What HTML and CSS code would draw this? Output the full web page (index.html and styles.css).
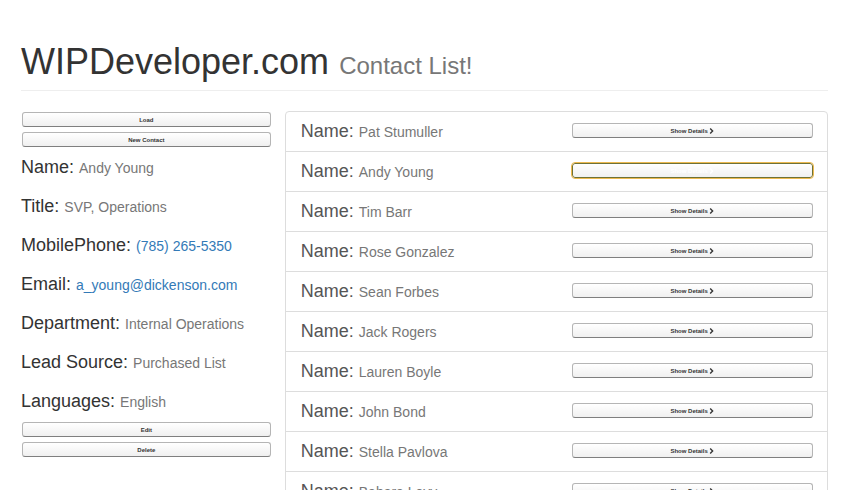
FILE: index.html
```
<!DOCTYPE html>
<html lang="en">
<head>
<meta charset="utf-8">
<title>WIPDeveloper.com Contact List</title>
<link rel="stylesheet" href="styles.css">
</head>
<body>
<header class="page-header">
  <h1>WIPDeveloper.com <small>Contact List!</small></h1>
</header>
<div class="layout">
  <section class="details">
    <button class="btn" type="button">Load</button>
    <button class="btn" type="button">New Contact</button>
    <div class="fields">
      <h4>Name: <small>Andy Young</small></h4>
      <h4>Title: <small>SVP, Operations</small></h4>
      <h4>MobilePhone: <small><a href="tel:7852655350">(785) 265-5350</a></small></h4>
      <h4>Email: <small><a href="mailto:a_young@dickenson.com">a_young@dickenson.com</a></small></h4>
      <h4>Department: <small>Internal Operations</small></h4>
      <h4>Lead Source: <small>Purchased List</small></h4>
      <h4>Languages: <small>English</small></h4>
    </div>
    <button class="btn" type="button">Edit</button>
    <button class="btn" type="button">Delete</button>
  </section>
  <main>
    <ul class="contacts">
      <li><h4>Name: <small>Pat Stumuller</small></h4><button class="btn" type="button">Show Details <svg class="chevron" viewBox="0 0 5 6" aria-hidden="true"><path d="M1.2.6 3.6 3 1.2 5.4"/></svg></button></li>
      <li><h4>Name: <small>Andy Young</small></h4><button class="btn selected" type="button">Show Details <svg class="chevron" viewBox="0 0 5 6" aria-hidden="true"><path d="M1.2.6 3.6 3 1.2 5.4"/></svg></button></li>
      <li><h4>Name: <small>Tim Barr</small></h4><button class="btn" type="button">Show Details <svg class="chevron" viewBox="0 0 5 6" aria-hidden="true"><path d="M1.2.6 3.6 3 1.2 5.4"/></svg></button></li>
      <li><h4>Name: <small>Rose Gonzalez</small></h4><button class="btn" type="button">Show Details <svg class="chevron" viewBox="0 0 5 6" aria-hidden="true"><path d="M1.2.6 3.6 3 1.2 5.4"/></svg></button></li>
      <li><h4>Name: <small>Sean Forbes</small></h4><button class="btn" type="button">Show Details <svg class="chevron" viewBox="0 0 5 6" aria-hidden="true"><path d="M1.2.6 3.6 3 1.2 5.4"/></svg></button></li>
      <li><h4>Name: <small>Jack Rogers</small></h4><button class="btn" type="button">Show Details <svg class="chevron" viewBox="0 0 5 6" aria-hidden="true"><path d="M1.2.6 3.6 3 1.2 5.4"/></svg></button></li>
      <li><h4>Name: <small>Lauren Boyle</small></h4><button class="btn" type="button">Show Details <svg class="chevron" viewBox="0 0 5 6" aria-hidden="true"><path d="M1.2.6 3.6 3 1.2 5.4"/></svg></button></li>
      <li><h4>Name: <small>John Bond</small></h4><button class="btn" type="button">Show Details <svg class="chevron" viewBox="0 0 5 6" aria-hidden="true"><path d="M1.2.6 3.6 3 1.2 5.4"/></svg></button></li>
      <li><h4>Name: <small>Stella Pavlova</small></h4><button class="btn" type="button">Show Details <svg class="chevron" viewBox="0 0 5 6" aria-hidden="true"><path d="M1.2.6 3.6 3 1.2 5.4"/></svg></button></li>
      <li><h4>Name: <small>Babara Levy</small></h4><button class="btn" type="button">Show Details <svg class="chevron" viewBox="0 0 5 6" aria-hidden="true"><path d="M1.2.6 3.6 3 1.2 5.4"/></svg></button></li>
    </ul>
  </main>
</div>
</body>
</html>
```
FILE: styles.css
```
* {
  box-sizing: border-box;
}

body {
  margin: 0;
  padding: 42px 25px 0 21px;
  background: #fff;
  color: #333;
  font-family: "Liberation Sans", Arial, sans-serif;
  font-size: 14px;
}

h1,
h4 {
  margin: 0;
  font-weight: 400;
}

h1 {
  font-size: 36px;
  line-height: 40px;
}

h1 small {
  font-size: 24px;
}

h4 {
  font-size: 18px;
  line-height: 20px;
}

small {
  color: #777;
  font-size: 14px;
  line-height: 1;
}

a {
  color: #337ab7;
  text-decoration: none;
}

.page-header {
  margin-bottom: 20px;
  padding-bottom: 8px;
  border-bottom: 1px solid #eee;
}

.layout {
  display: grid;
  grid-template-columns: 6fr 13fr;
  align-items: start;
  gap: 13px;
}

.details {
  display: flex;
  flex-direction: column;
  gap: 5px;
  padding-top: 1px;
}

.fields {
  display: grid;
  gap: 19px;
  padding: 5px 0 6px;
}

.btn {
  display: block;
  height: 15px;
  margin: 0 1px;
  padding: 2px 3px 0;
  border: 1px solid #b5b5b5;
  border-bottom-color: #7f7f7f;
  border-radius: 3px;
  background: linear-gradient(#fff, #f0f0f0);
  color: #333;
  font: bold 6px/11px "Liberation Sans", Arial, sans-serif;
  text-align: center;
}

.btn.selected {
  border-color: #6e7135;
  outline: 1px solid #edb94f;
  color: #fff;
}

.chevron {
  width: 5px;
  height: 6px;
  vertical-align: -1px;
  fill: none;
  stroke: currentColor;
  stroke-width: 1.4;
}

.contacts {
  margin: 0;
  padding: 0;
  border: 1px solid #ddd;
  border-radius: 4px;
  list-style: none;
}

.contacts li {
  display: grid;
  grid-template-columns: 10fr 9fr;
  align-items: start;
  padding: 9px 13px 10px 15px;
}

.contacts li + li {
  border-top: 1px solid #ddd;
}

.contacts h4 {
  color: #555;
}

.contacts .btn {
  margin-top: 2px;
}
```
